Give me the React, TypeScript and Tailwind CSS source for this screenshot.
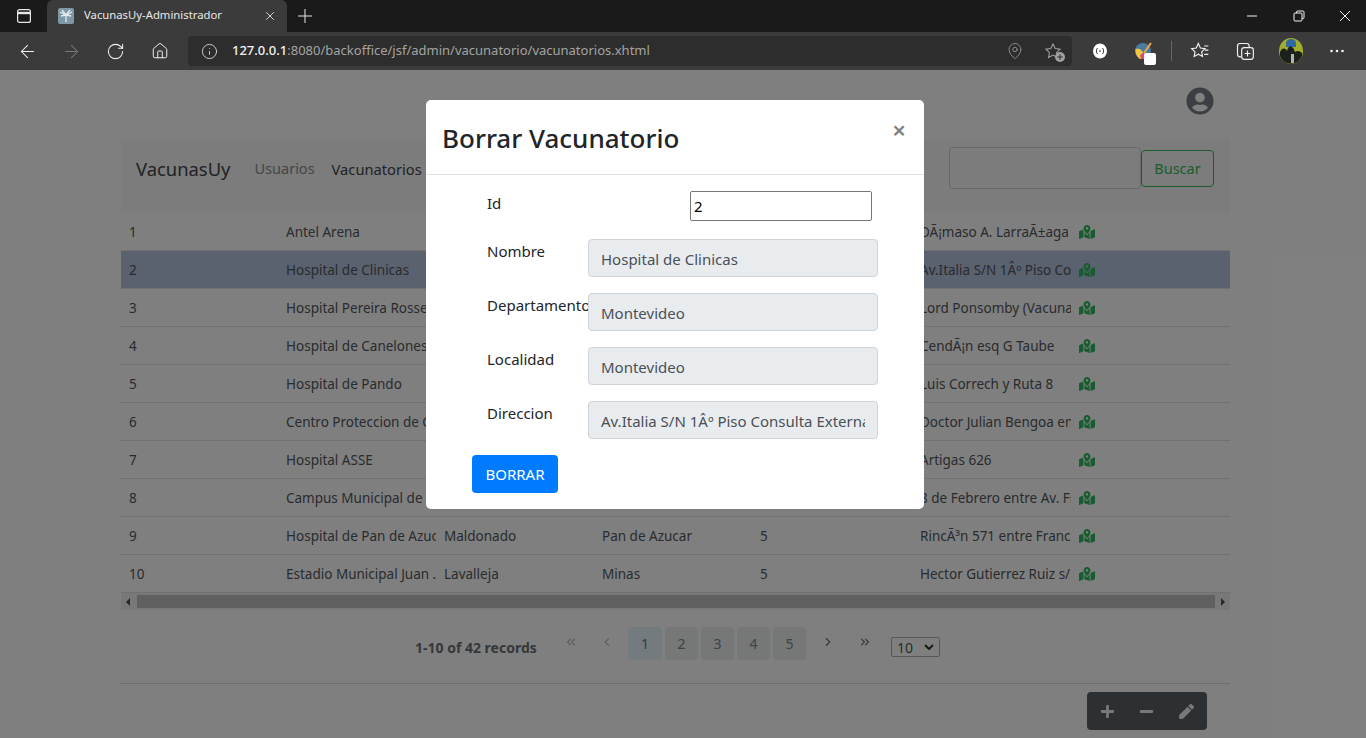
import React from 'react';
import { ArrowLeft, ArrowRight, RotateCw, Home, Info, MapPin, Plus, X, ChevronLeft, ChevronRight, ChevronsLeft, ChevronsRight } from 'lucide-react';
import { FaMapMarkedAlt, FaUserCircle, FaPlus, FaMinus, FaPen } from 'react-icons/fa';

const rows = [
  ['1', 'Antel Arena', '', '', '', 'DÃ¡maso A. LarraÃ±aga'],
  ['2', 'Hospital de Clinicas', '', '', '', 'Av.Italia S/N 1Âº Piso Consulta Externa'],
  ['3', 'Hospital Pereira Rossell', '', '', '', 'Lord Ponsomby (Vacunatorio)'],
  ['4', 'Hospital de Canelones', '', '', '', 'CendÃ¡n esq G Taube'],
  ['5', 'Hospital de Pando', '', '', '', 'Luis Correch y Ruta 8'],
  ['6', 'Centro Proteccion de Choferes', '', '', '', 'Doctor Julian Bengoa entre'],
  ['7', 'Hospital ASSE', '', '', '', 'Artigas 626'],
  ['8', 'Campus Municipal de Maldonado', '', '', '', '8 de Febrero entre Av. Francia'],
  ['9', 'Hospital de Pan de Azucar', 'Maldonado', 'Pan de Azucar', '5', 'RincÃ³n 571 entre Francia'],
  ['10', 'Estadio Municipal Juan .', 'Lavalleja', 'Minas', '5', 'Hector Gutierrez Ruiz s/n'],
];

const fields = [
  ['Nombre', 'Hospital de Clinicas'],
  ['Departamento', 'Montevideo'],
  ['Localidad', 'Montevideo'],
  ['Direccion', 'Av.Italia S/N 1Âº Piso Consulta Externa'],
];

const BrowserChrome = () => (
  <div className="h-[70px] shrink-0 bg-[#1a1a1a] text-white">
    <div className="flex h-[32px] items-end">
      <div className="flex h-[32px] w-[47px] items-center justify-center">
        <svg width="16" height="16" viewBox="0 0 16 16" fill="none" stroke="#e8e8e8" strokeWidth="1.2">
          <rect x="1.6" y="1.6" width="12.8" height="12.8" rx="2" />
          <path d="M1.6 5h12.8" strokeWidth="2.4" />
        </svg>
      </div>
      <div className="flex h-[32px] w-[240px] items-center rounded-t-md bg-[#3b3b3b] pb-[1px] pl-[11px]">
        <svg width="16" height="16" viewBox="0 0 16 16" className="shrink-0">
          <rect width="16" height="16" rx="2" fill="#7f98a6" />
          <path d="M2 4l6 3 6-3M8 7v7M4 2l4 5 4-5M3 8l5-1 5 1" stroke="#e6ebee" strokeWidth="1.3" fill="none" />
        </svg>
        <span className="ml-[10px] flex-1 font-['Noto_Sans',sans-serif] text-[11.3px] text-[#e8e8e8]">VacunasUy-Administrador</span>
        <X size={14} strokeWidth={1.6} className="mr-[10px] text-[#e0e0e0]" />
      </div>
      <div className="flex h-[32px] w-[36px] items-center justify-center">
        <svg width="16" height="16" viewBox="0 0 16 16" stroke="#e8e8e8" strokeWidth="1">
          <path d="M8 1v14M1 8h14" />
        </svg>
      </div>
      <div className="flex-1" />
      <div className="flex h-[32px] items-center pr-[15px]">
        <svg width="12" height="12" viewBox="0 0 12 12" stroke="#f0f0f0" strokeWidth="1" className="mr-[35px]"><path d="M1 6h10" /></svg>
        <svg width="12" height="12" viewBox="0 0 12 12" fill="none" stroke="#f0f0f0" strokeWidth="1" className="mr-[34px]">
          <rect x="1" y="3" width="8" height="8" rx="1" />
          <path d="M3.500 3V2a1 1 0 0 1 1-1H10a1 1 0 0 1 1 1v5.500a1 1 0 0 1-1 1H9" />
        </svg>
        <svg width="12" height="12" viewBox="0 0 12 12" stroke="#f0f0f0" strokeWidth="1"><path d="M1 1l10 10M11 1L1 11" /></svg>
      </div>
    </div>
    <div className="flex h-[38px] items-center bg-[#3b3b3b]">
      <div className="flex w-[188px] items-center pl-[17px]">
        <ArrowLeft size={21} strokeWidth={1.2} className="text-[#f0f0f0]" />
        <ArrowRight size={21} strokeWidth={1.2} className="ml-[23px] text-[#777777]" />
        <RotateCw size={19} strokeWidth={1.3} className="ml-[24px] text-[#f0f0f0]" />
        <Home size={18} strokeWidth={1.3} className="ml-[26px] text-[#f0f0f0]" />
      </div>
      <div className="flex h-[30px] w-[884px] items-center rounded-[4px] bg-[#2d2d2d] pl-[13px] pr-[10px] font-['Noto_Sans',sans-serif]">
        <Info size={17} strokeWidth={1.2} className="text-[#e0e0e0]" />
        <span className="ml-[14px] flex-1 text-[13px] text-[#a4a4a4]">
          <span className="font-medium text-[#f2f2f2]">127.0.0.1</span>:8080/backoffice/jsf/admin/vacunatorio/vacunatorios.xhtml
        </span>
        <MapPin size={18} strokeWidth={1.1} className="mr-[20px] text-[#9a9a9a]" />
        <div className="relative">
          <svg width="18" height="18" viewBox="0 0 24 24" fill="none" stroke="#a0a0a0" strokeWidth="1.4">
            <path d="M12 2.5l2.9 6.1 6.600.9-4.800 4.600 1.200 6.600L12 17.500l-5.900 3.200 1.200-6.600L2.500 9.500l6.600-.9z" />
          </svg>
          <span className="absolute -bottom-[2px] -right-[3px] flex h-[10px] w-[10px] items-center justify-center rounded-full bg-[#a0a0a0]">
            <Plus size={8} strokeWidth={3} className="text-[#2d2d2d]" />
          </span>
        </div>
      </div>
      <div className="flex flex-1 items-center pl-[20px]">
        <svg width="16" height="16" viewBox="0 0 16 16">
          <ellipse cx="8" cy="8" rx="7" ry="7.500" fill="#ffffff" />
          <path d="M5.500 5C4 6.500 4 9.500 5.500 11M10.500 5C12 6.500 12 9.500 10.500 11" stroke="#333333" strokeWidth="1" fill="none" />
          <path d="M7 8h2" stroke="#333333" strokeWidth="1" />
        </svg>
        <div className="relative ml-[27px] h-[18px] w-[18px]">
          <svg width="18" height="18" viewBox="0 0 18 18">
            <circle cx="8" cy="9" r="8" fill="#4a7aa0" />
            <path d="M0.500 7C4 6 8 8 8 12v5H5C2 15 0 11 0.500 7z" fill="#f0c93a" />
            <path d="M5 13l3-2 2 6H6z" fill="#e0457b" />
            <path d="M9 11l7-10" stroke="#f4a640" strokeWidth="2" />
          </svg>
          <span className="absolute -bottom-[5px] -right-[3px] h-[12px] w-[12px] rounded-[2px] bg-white" />
        </div>
        <span className="ml-[18px] h-[20px] w-px bg-[#666666]" />
        <svg width="20" height="20" viewBox="0 0 24 24" fill="none" stroke="#f0f0f0" strokeWidth="1.4" className="ml-[18px]">
          <path d="M10 3l2.500 5.500 5.500.7-4 3.800 1 5.500-5-2.700-5 2.700 1-5.500-4-3.800 5.500-.7zM17 6h5M18 11h4M17 16h5" />
        </svg>
        <svg width="20" height="20" viewBox="0 0 24 24" fill="none" stroke="#f0f0f0" strokeWidth="1.4" className="ml-[25px]">
          <rect x="8" y="8" width="14" height="14" rx="3" />
          <path d="M15 11.500v7M11.500 15h7M8 19H6a3 3 0 0 1-3-3V6a3 3 0 0 1 3-3h8a3 3 0 0 1 3 3v2" />
        </svg>
        <svg width="24" height="26" viewBox="0 0 24 26" className="ml-[24px]">
          <ellipse cx="12" cy="13" rx="12" ry="13" fill="#a3ad2c" />
          <path d="M7 5a5 4 0 0 1 10 0v4H7z" fill="#2f6aa0" />
          <path d="M1 14c2-5 6-4 7-1 1-3 2-6 5-4 2 1 2 3 3 5 2-2 5-1 7 1v3a12 13 0 0 1-22 0z" fill="#1b211d" />
          <path d="M12 16h3v9h-3z" fill="#aeb4b0" />
        </svg>
        <svg width="18" height="18" viewBox="0 0 18 18" fill="#f0f0f0" className="ml-[25px]">
          <circle cx="3.500" cy="9" r="1.300" />
          <circle cx="9" cy="9" r="1.300" />
          <circle cx="14.500" cy="9" r="1.300" />
        </svg>
      </div>
    </div>
  </div>
);

const PageBehind = () => (
  <div className="flex h-full flex-col pl-[121px] pr-[136px] font-['Noto_Sans',sans-serif] text-[13.5px] text-[#52575c]">
    <div className="flex h-[69px] shrink-0 items-center justify-end pr-[16px]">
      <FaUserCircle size={28} className="mt-[-7px] text-[#777e88]" />
    </div>
    <div className="flex h-[74px] shrink-0 items-center bg-[#f6f9f7] pb-[16px] pl-[15px] pr-[16px]">
      <span className="pt-[2px] text-[18.4px] text-[#42464b]">VacunasUy</span>
      <span className="ml-[24px] pt-[2px] text-[14.500px] text-[#8a8c8e]">Usuarios</span>
      <span className="ml-[17px] pt-[2px] text-[14.700px] text-[#42464b]">Vacunatorios</span>
      <div className="flex-1" />
      <div className="h-[42px] w-[192px] rounded-[4px] border border-[#ced4da] bg-[#f6f9f7]" />
      <div className="flex h-[37px] w-[73px] items-center justify-center rounded-[4px] border border-[#38b858] pt-[1px] text-[14.500px] text-[#38b858]">Buscar</div>
    </div>
    <div className="shrink-0">
      {rows.map((r) => (
        <div
          key={r[0]}
          className={`grid h-[38px] grid-cols-[157px_158px_158px_158px_160px_159px_1fr] items-center border-b border-[#dee2e6] pt-[2px] ${r[0] === '2' ? 'bg-[#b4c2de]' : ''}`}
        >
          {r.map((c, i) => (
            <div key={i} className="overflow-hidden whitespace-nowrap px-[8px]">{c}</div>
          ))}
          <div className="-mt-[2px] pl-[8px]">
            <FaMapMarkedAlt size={16} className="text-[#30b860]" />
          </div>
        </div>
      ))}
    </div>
    <div className="flex h-[17px] shrink-0 items-center bg-[#f1f1f1]">
      <span className="ml-[5px] h-0 w-0 border-y-[4px] border-r-[4px] border-y-transparent border-r-[#505050]" />
      <div className="ml-[7px] h-[13px] flex-1 bg-[#c1c1c1]" />
      <span className="ml-[6px] mr-[5px] h-0 w-0 border-y-[4px] border-l-[4px] border-y-transparent border-l-[#505050]" />
    </div>
    <div className="flex h-[50px] shrink-0 items-center pl-[294px] pt-[17px]">
      <span className="mt-[7px] w-[149px] text-[14px] font-bold text-[#6b7076]">1-10 of 42 records</span>
      <ChevronsLeft size={14} strokeWidth={1.8} className="mt-[-3px] text-[#a8aaad]" />
      <ChevronLeft size={14} strokeWidth={1.8} className="ml-[22px] mt-[-3px] text-[#a8aaad]" />
      <div className="ml-[14px] flex gap-[3px] text-[14px] text-[#80858a]">
        <span className="flex h-[33px] w-[34px] items-center justify-center rounded-[4px] bg-[#e8f6ff] text-[#5a76a0]">1</span>
        {['2', '3', '4', '5'].map((p) => (
          <span key={p} className="flex h-[33px] w-[33px] items-center justify-center rounded-[4px] bg-[#eceeef]">{p}</span>
        ))}
      </div>
      <ChevronRight size={14} strokeWidth={2} className="ml-[15px] mt-[-3px] text-[#6b7076]" />
      <ChevronsRight size={14} strokeWidth={2} className="ml-[23px] mt-[-3px] text-[#6b7076]" />
      <div className="ml-[19px] mt-[7px] flex h-[20px] w-[49px] items-center justify-between rounded-[2px] border border-[#b0b0b0] px-[5px] text-[14px] text-[#52575c]">
        <span>10</span>
        <svg width="10" height="6" viewBox="0 0 10 6" fill="none" stroke="#333333" strokeWidth="2"><path d="M1 1l4 4 4-4" /></svg>
      </div>
    </div>
    <div className="-ml-px mt-[23px] h-px shrink-0 bg-[#d8dcdf]" />
    <div className="mt-[8px] flex shrink-0 justify-end pr-[23px]">
      <div className="flex h-[38px] w-[120px] items-center rounded-[4px] bg-[#596066] text-[#f0f0f0]">
        <span className="flex w-[40px] justify-center"><FaPlus size={15} /></span>
        <span className="flex w-[38px] justify-center"><FaMinus size={15} /></span>
        <span className="flex w-[42px] justify-center"><FaPen size={15} /></span>
      </div>
    </div>
  </div>
);

const DeleteModal = () => (
  <div className="absolute inset-0 bg-black/50 font-['Noto_Sans',sans-serif]">
    <div className="ml-[426px] mt-[30px] h-[409px] w-[498px] rounded-[5px] bg-white text-[#212529]">
      <div className="flex h-[75px] items-start justify-between border-b border-[#dee2e6] pl-[16px] pr-[18px]">
        <h2 className="mt-[19px] text-[26px] font-medium leading-[38px]">Borrar Vacunatorio</h2>
        <span className="mt-[14px] text-[24px] font-semibold leading-[32px] text-[#808080]">×</span>
      </div>
      <div className="pl-[61px] pt-[16px] text-[15px]">
        <div className="flex h-[30px]">
          <label className="w-[203px] pt-[1px]">Id</label>
          <input
            readOnly
            value="2"
            className="h-[30px] w-[182px] rounded-[2px] border border-[#767676] px-[3px] text-[15px] text-black outline-none"
          />
        </div>
        <div className="mt-[18px] flex flex-col gap-[16px]">
          {fields.map(([label, value]) => (
            <div key={label} className="flex h-[38px]">
              <label className="w-[101px] whitespace-nowrap pt-[1px]">{label}</label>
              <div className="flex h-[38px] w-[290px] items-center rounded-[4px] border border-[#ced4da] bg-[#e9ecef] px-[12px] pt-[2px] text-[#495057]">
                <span className="overflow-hidden whitespace-nowrap">{value}</span>
              </div>
            </div>
          ))}
        </div>
        <button className="-ml-[15px] mt-[16px] flex h-[38px] w-[86px] items-center justify-center rounded-[4px] bg-[#007bff] text-[15px] text-white">BORRAR</button>
      </div>
    </div>
  </div>
);

export default function App() {
  return (
    <div className="flex h-[738px] w-[1366px] flex-col overflow-hidden bg-white">
      <BrowserChrome />
      <div className="relative flex-1 overflow-hidden">
        <PageBehind />
        <DeleteModal />
      </div>
    </div>
  );
}
